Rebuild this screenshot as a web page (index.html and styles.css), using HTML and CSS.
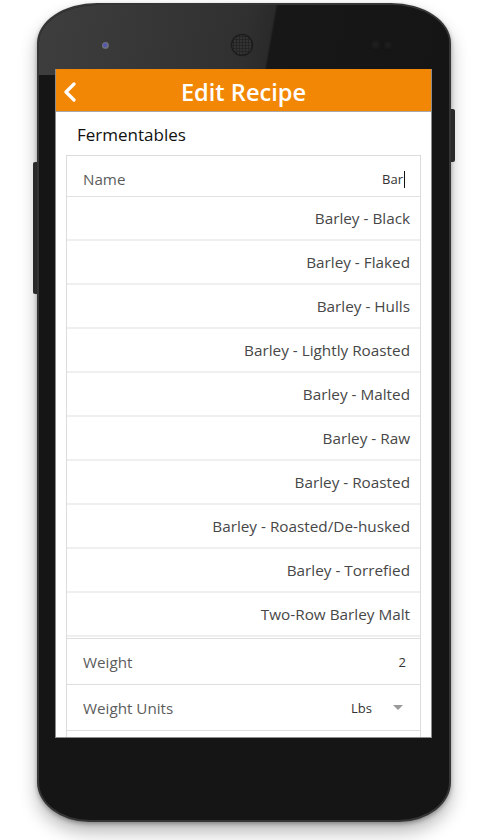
FILE: index.html
```html
<!DOCTYPE html>
<html>
<head>
<meta charset="utf-8">
<link rel="stylesheet" href="styles.css">
</head>
<body>
<div class="phone">
  <span class="glare"></span>
  <span class="btn-left"></span>
  <span class="btn-right"></span>
  <span class="camera"></span>
  <span class="speaker"></span>
  <span class="sensor s1"></span>
  <span class="sensor s2"></span>
  <div class="screen">
    <header class="appbar">
      <span class="back"><svg width="14" height="20" viewBox="0 0 14 20"><polyline points="11,2 3,10 11,18" fill="none" stroke="#fff" stroke-width="3.2" stroke-linecap="round" stroke-linejoin="round"/></svg></span>
      <h1 class="title">Edit Recipe</h1>
      <span></span>
    </header>
    <main class="content">
      <div class="section-title">Fermentables</div>
      <div class="card">
        <div class="field">
          <span class="label">Name</span>
          <span class="input">Bar<span class="caret"></span></span>
        </div>
        <ul class="suggestions">
          <li>Barley - Black</li>
          <li>Barley - Flaked</li>
          <li>Barley - Hulls</li>
          <li>Barley - Lightly Roasted</li>
          <li>Barley - Malted</li>
          <li>Barley - Raw</li>
          <li>Barley - Roasted</li>
          <li>Barley - Roasted/De-husked</li>
          <li>Barley - Torrefied</li>
          <li>Two-Row Barley Malt</li>
        </ul>
        <div class="fields">
          <div class="row">
            <span class="label">Weight</span>
            <span class="value">2</span>
          </div>
          <div class="row">
            <span class="label">Weight Units</span>
            <span class="select"><span class="sel-val">Lbs</span><span class="arrow"></span></span>
          </div>
          <div class="row"></div>
        </div>
      </div>
    </main>
  </div>
</div>
</body>
</html>
```

FILE: styles.css
```css
* { box-sizing: border-box; }
html, body { margin: 0; padding: 0; background: #fff; }
body {
  width: 488px;
  height: 840px;
  overflow: hidden;
  font-family: "Open Sans", "Noto Sans", sans-serif;
}
.phone {
  position: relative;
  margin: 3px 0 0 37px;
  width: 414px;
  height: 819px;
  padding: 64px 17px 0 16px;
  background: #151515;
  border: 2px solid #353535;
  border-radius: 60px 60px 52px 52px / 40px 40px 40px 40px;
  box-shadow: 0 10px 18px rgba(0,0,0,0.28), 0 2px 4px rgba(0,0,0,0.3);
}
.glare {
  position: absolute;
  left: 0; top: 0;
  width: 100%;
  height: 70px;
  border-radius: 58px 58px 0 0 / 38px 38px 0 0;
  background: linear-gradient(100deg, #3e3e3e 0%, #303030 50%, #2a2a2a 56%, #171717 56.6%, #151515 100%);
}
.btn-left {
  position: absolute;
  left: -6px; top: 157px;
  width: 4px; height: 132px;
  background: #2a2a2a;
  border-radius: 2px 0 0 2px;
}
.btn-right {
  position: absolute;
  right: -6px; top: 104px;
  width: 4px; height: 53px;
  background: #2a2a2a;
  border-radius: 0 2px 2px 0;
}
.camera {
  position: absolute;
  left: 63px; top: 37px;
  width: 7px; height: 7px;
  border-radius: 50%;
  background: radial-gradient(circle at 45% 45%, #5558aa 0 30%, #777 55%, #3a3a3a 100%);
}
.speaker {
  position: absolute;
  left: 193px; top: 30px;
  width: 20px; height: 20px;
  border-radius: 50%;
  background: radial-gradient(circle, #252525 0 1px, #333 1.2px) 0 0 / 3px 3px, #2a2a2a;
  box-shadow: 0 0 1px 1px rgba(0,0,0,0.5);
}
.sensor {
  position: absolute;
  top: 37px;
  width: 5px; height: 5px;
  border-radius: 50%;
  background: #1e1e1e;
  box-shadow: 0 0 3px 1px rgba(40,40,40,0.6);
}
.s1 { left: 334px; }
.s2 { left: 347px; width: 4px; height: 4px; top: 38px; }

.screen {
  position: relative;
  width: 377px;
  height: 669px;
  background: #fff;
  overflow: hidden;
  display: flex;
  flex-direction: column;
  border: 1px solid #8c8c8c;
  border-top: 0;
}
.appbar {
  flex: none;
  height: 43px;
  background: #f28705;
  border-bottom: 1px solid #a8a8a8;
  display: grid;
  grid-template-columns: 1fr auto 1fr;
  align-items: center;
}
.back {
  display: flex;
  padding-left: 7px;
  padding-top: 2px;
}
.title {
  margin: 0;
  color: #fff;
  font-size: 23.6px;
  font-weight: 600;
  line-height: 42px;
  padding-top: 2px;
}
.content {
  flex: 1;
  padding: 0 10px;
}
.section-title {
  height: 43px;
  line-height: 43px;
  padding-left: 11px;
  padding-top: 1px;
  font-size: 17px;
  color: #111;
}
.card {
  border: 1px solid #dcdcdc;
  border-bottom: 0;
}
.field {
  height: 41px;
  display: flex;
  align-items: center;
  justify-content: space-between;
  padding: 6px 15px 0 16px;
  border-bottom: 1px solid #e2e2e2;
}
.label {
  font-size: 15.2px;
  color: #5c5c5c;
}
.input {
  display: flex;
  align-items: center;
  font-size: 13px;
  color: #333;
}
.caret {
  display: inline-block;
  width: 1px;
  height: 17px;
  margin-left: 1px;
  background: #111;
}
.suggestions {
  list-style: none;
  margin: 0;
  padding: 0;
}
.suggestions li {
  height: 44px;
  line-height: 42px;
  border-bottom: 2px solid #efefef;
  text-align: right;
  padding-right: 10px;
  font-size: 15.3px;
  color: #474747;
}
.fields {
  border-top: 1px solid #dedede;
  margin-top: 1px;
}
.row {
  height: 46px;
  display: flex;
  align-items: center;
  justify-content: space-between;
  padding: 0 14px 0 16px;
  border-bottom: 1px solid #dedede;
}
.value {
  font-size: 13px;
  color: #333;
}
.select {
  display: flex;
  align-items: center;
  gap: 21px;
  padding-right: 5px;
}
.sel-val {
  font-size: 13px;
  color: #333;
}
.arrow {
  width: 0; height: 0;
  border-left: 5px solid transparent;
  border-right: 5px solid transparent;
  border-top: 5px solid #9a9a9a;
  margin-right: -2px;
}
```
